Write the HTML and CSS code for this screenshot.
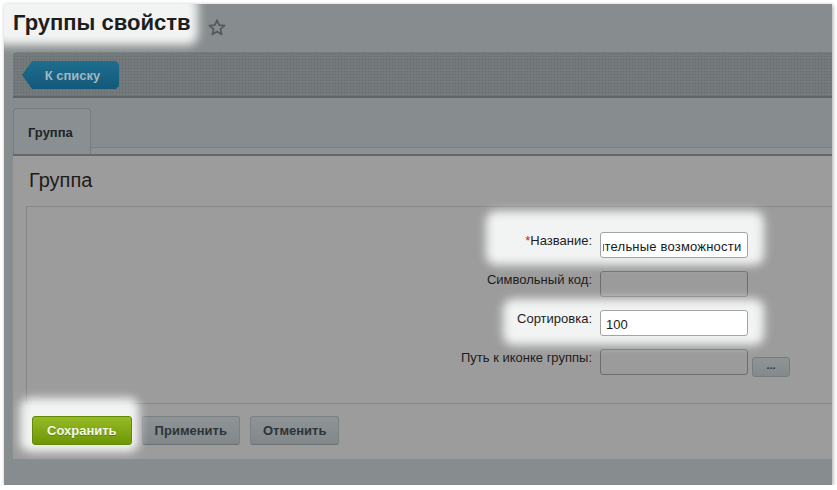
FILE: index.html
```html
<!DOCTYPE html>
<html lang="ru">
<head>
<meta charset="utf-8">
<title>Группы свойств</title>
<link rel="stylesheet" href="styles.css">
</head>
<body>
<div class="frame">
  <header class="title-bar">
    <h1 class="title spot spot-title">Группы свойств</h1>
    <svg class="star" width="18" height="18" viewBox="0 0 18 18" aria-hidden="true">
      <polygon points="9,1.2 11.12,6.09 16.61,6.53 12.42,10.11 13.7,15.47 9,12.6 4.3,15.47 5.58,10.11 1.39,6.53 6.88,6.09" fill="none" stroke="#55595b" stroke-width="1.7" stroke-linejoin="round"/>
    </svg>
  </header>

  <div class="toolbar">
    <a class="back-btn">К списку</a>
  </div>

  <div class="tabs">
    <div class="tab">Группа</div>
    <div class="tab-fill"></div>
  </div>

  <div class="panel">
    <h2 class="panel-title">Группа</h2>
    <div class="form-box">
      <div class="row spot spot-name">
        <label class="lbl" for="f-name"><span class="req">*</span>Название:</label>
        <input id="f-name" class="field field-lit field-end" type="text" value="Дополнительные возможности">
      </div>
      <div class="row">
        <label class="lbl" for="f-code">Символьный код:</label>
        <input id="f-code" class="field" type="text" value="">
      </div>
      <div class="row spot spot-sort">
        <label class="lbl" for="f-sort">Сортировка:</label>
        <input id="f-sort" class="field field-lit" type="text" value="100">
      </div>
      <div class="row">
        <label class="lbl" for="f-icon">Путь к иконке группы:</label>
        <input id="f-icon" class="field" type="text" value="">
        <div class="dots-btn">...</div>
      </div>
    </div>
    <div class="actions">
      <div class="spot spot-save"><button class="btn btn-save">Сохранить</button></div>
      <button class="btn btn-grey">Применить</button>
      <button class="btn btn-grey">Отменить</button>
    </div>
  </div>
</div>
<script src="script.js"></script>
</body>
</html>
```

FILE: styles.css
```css
* { box-sizing: border-box; }

body {
  margin: 0;
  background: #ffffff;
  font-family: "Liberation Sans", Arial, sans-serif;
}

.frame {
  margin: 4px 0 0 4px;
  width: 828px;
  height: 481px;
  background: #878c8e;
  box-shadow: 1px 1px 4px rgba(0, 0, 0, 0.35);
  overflow: hidden;
  position: relative;
}

/* spotlight glows */
.spot { position: relative; z-index: 0; }
.spot::before {
  content: "";
  position: absolute;
  z-index: -1;
  background: #f2f3f3;
  border-radius: 10px;
  filter: blur(5px);
}
.spot-title::before { left: -20px; top: -16px; right: -8px; bottom: -9px; }
.spot-name::before { left: 459px; width: 278px; top: -21px; bottom: -7px; }
.spot-sort::before { left: 476px; width: 261px; top: -11px; bottom: -9px; }
.spot-save::before { left: -12px; right: -7px; top: -18px; bottom: -7px; }

/* title */
.title-bar {
  height: 48px;
  display: flex;
  align-items: flex-start;
  padding: 6px 0 0 9px;
}
.title {
  margin: 0;
  font-size: 22px;
  line-height: 26px;
  font-weight: bold;
  color: #1e1e1e;
}
.star {
  margin: 9px 0 0 18px;
  flex: none;
}

/* toolbar */
.toolbar {
  height: 46px;
  margin-left: 9px;
  padding: 9px 0 0 9px;
  background-color: #757b7d;
  background-image: radial-gradient(circle, #686e70 0.7px, transparent 1.1px);
  background-size: 3px 3px;
  border-bottom: 2px solid #5f6567;
  border-top-left-radius: 4px;
}
.back-btn {
  display: flex;
  align-items: center;
  justify-content: center;
  width: 97px;
  height: 28px;
  padding-left: 4px;
  background: linear-gradient(#1e6e90, #135879);
  color: #a3b6c0;
  font-weight: bold;
  font-size: 13px;
  clip-path: polygon(10px 0, calc(100% - 3px) 0, 100% 3px, 100% calc(100% - 3px), calc(100% - 3px) 100%, 10px 100%, 0 50%);
}

/* tabs */
.tabs {
  height: 58px;
  margin-left: 9px;
  padding-top: 10px;
  display: flex;
  align-items: flex-end;
  border-bottom: 2px solid #63696b;
}
.tab {
  width: 78px;
  height: 46px;
  padding: 16px 0 0 14px;
  background: #8a8f91;
  border: 1px solid #767b7d;
  border-bottom: 0;
  border-radius: 4px 4px 0 0;
  font-weight: bold;
  font-size: 13px;
  line-height: 16px;
  color: #202527;
}
.tab-fill {
  flex: 1;
  height: 7px;
  background: #8c9193;
  border-top: 1px solid #7a8082;
}

/* panel */
.panel {
  margin-left: 9px;
  height: 303px;
  background: #9c9c9c;
}
.panel-title {
  margin: 0;
  height: 50px;
  padding: 12px 0 0 16px;
  font-size: 20px;
  line-height: 24px;
  font-weight: normal;
  color: #1b1b1b;
}
.form-box {
  margin-left: 13px;
  height: 198px;
  padding-top: 25px;
  border: 1px solid #878787;
  border-right: 0;
}
.row {
  display: flex;
  height: 26px;
  margin-bottom: 13px;
}
.lbl {
  width: 565px;
  margin-right: 8px;
  padding-top: 1px;
  text-align: right;
  font-size: 13px;
  line-height: 16px;
  color: #1d1d1d;
}
.req { color: #d0181c; }
.field {
  width: 148px;
  height: 26px;
  margin: 0;
  padding: 3px 5px 0;
  border: 1px solid #6d6d6d;
  border-radius: 3px;
  background: #9b9b9b;
  font-family: "Liberation Sans", Arial, sans-serif;
  font-size: 13px;
  color: #1a1a1a;
  outline: none;
}
.field-lit {
  background: #ffffff;
  border-color: #a3a3a3;
}
.field-end {
  padding-left: 2px;
  padding-right: 6px;
  letter-spacing: 0.2px;
}
.dots-btn {
  width: 38px;
  height: 20px;
  margin: 0 0 -2px 4px;
  align-self: flex-end;
  background: linear-gradient(#8f9496, #84898b);
  border: 1px solid #777c7e;
  border-radius: 3px;
  font-weight: bold;
  font-size: 11px;
  line-height: 14px;
  text-align: center;
  color: #33383b;
}

/* actions */
.actions {
  display: flex;
  gap: 10px;
  padding: 12px 0 0 19px;
}
.btn {
  height: 29px;
  padding: 0 12px;
  border-radius: 3px;
  font-family: "Liberation Sans", Arial, sans-serif;
  font-weight: bold;
  font-size: 13px;
  cursor: pointer;
}
.btn-save {
  padding: 0 14px;
  background: linear-gradient(#96ba26, #6e9705);
  border: 1px solid #638a06;
  color: #f5f8ea;
  text-shadow: 0 1px 0 rgba(0, 0, 0, 0.25);
}
.btn-grey {
  background: linear-gradient(#8f9496, #82878a);
  border: 1px solid #7b8083;
  border-bottom-color: #6a6f71;
  color: #2f3437;
}
```

FILE: script.js
```js
var f = document.getElementById('f-name');
if (f) { f.scrollLeft = f.scrollWidth; }
```
